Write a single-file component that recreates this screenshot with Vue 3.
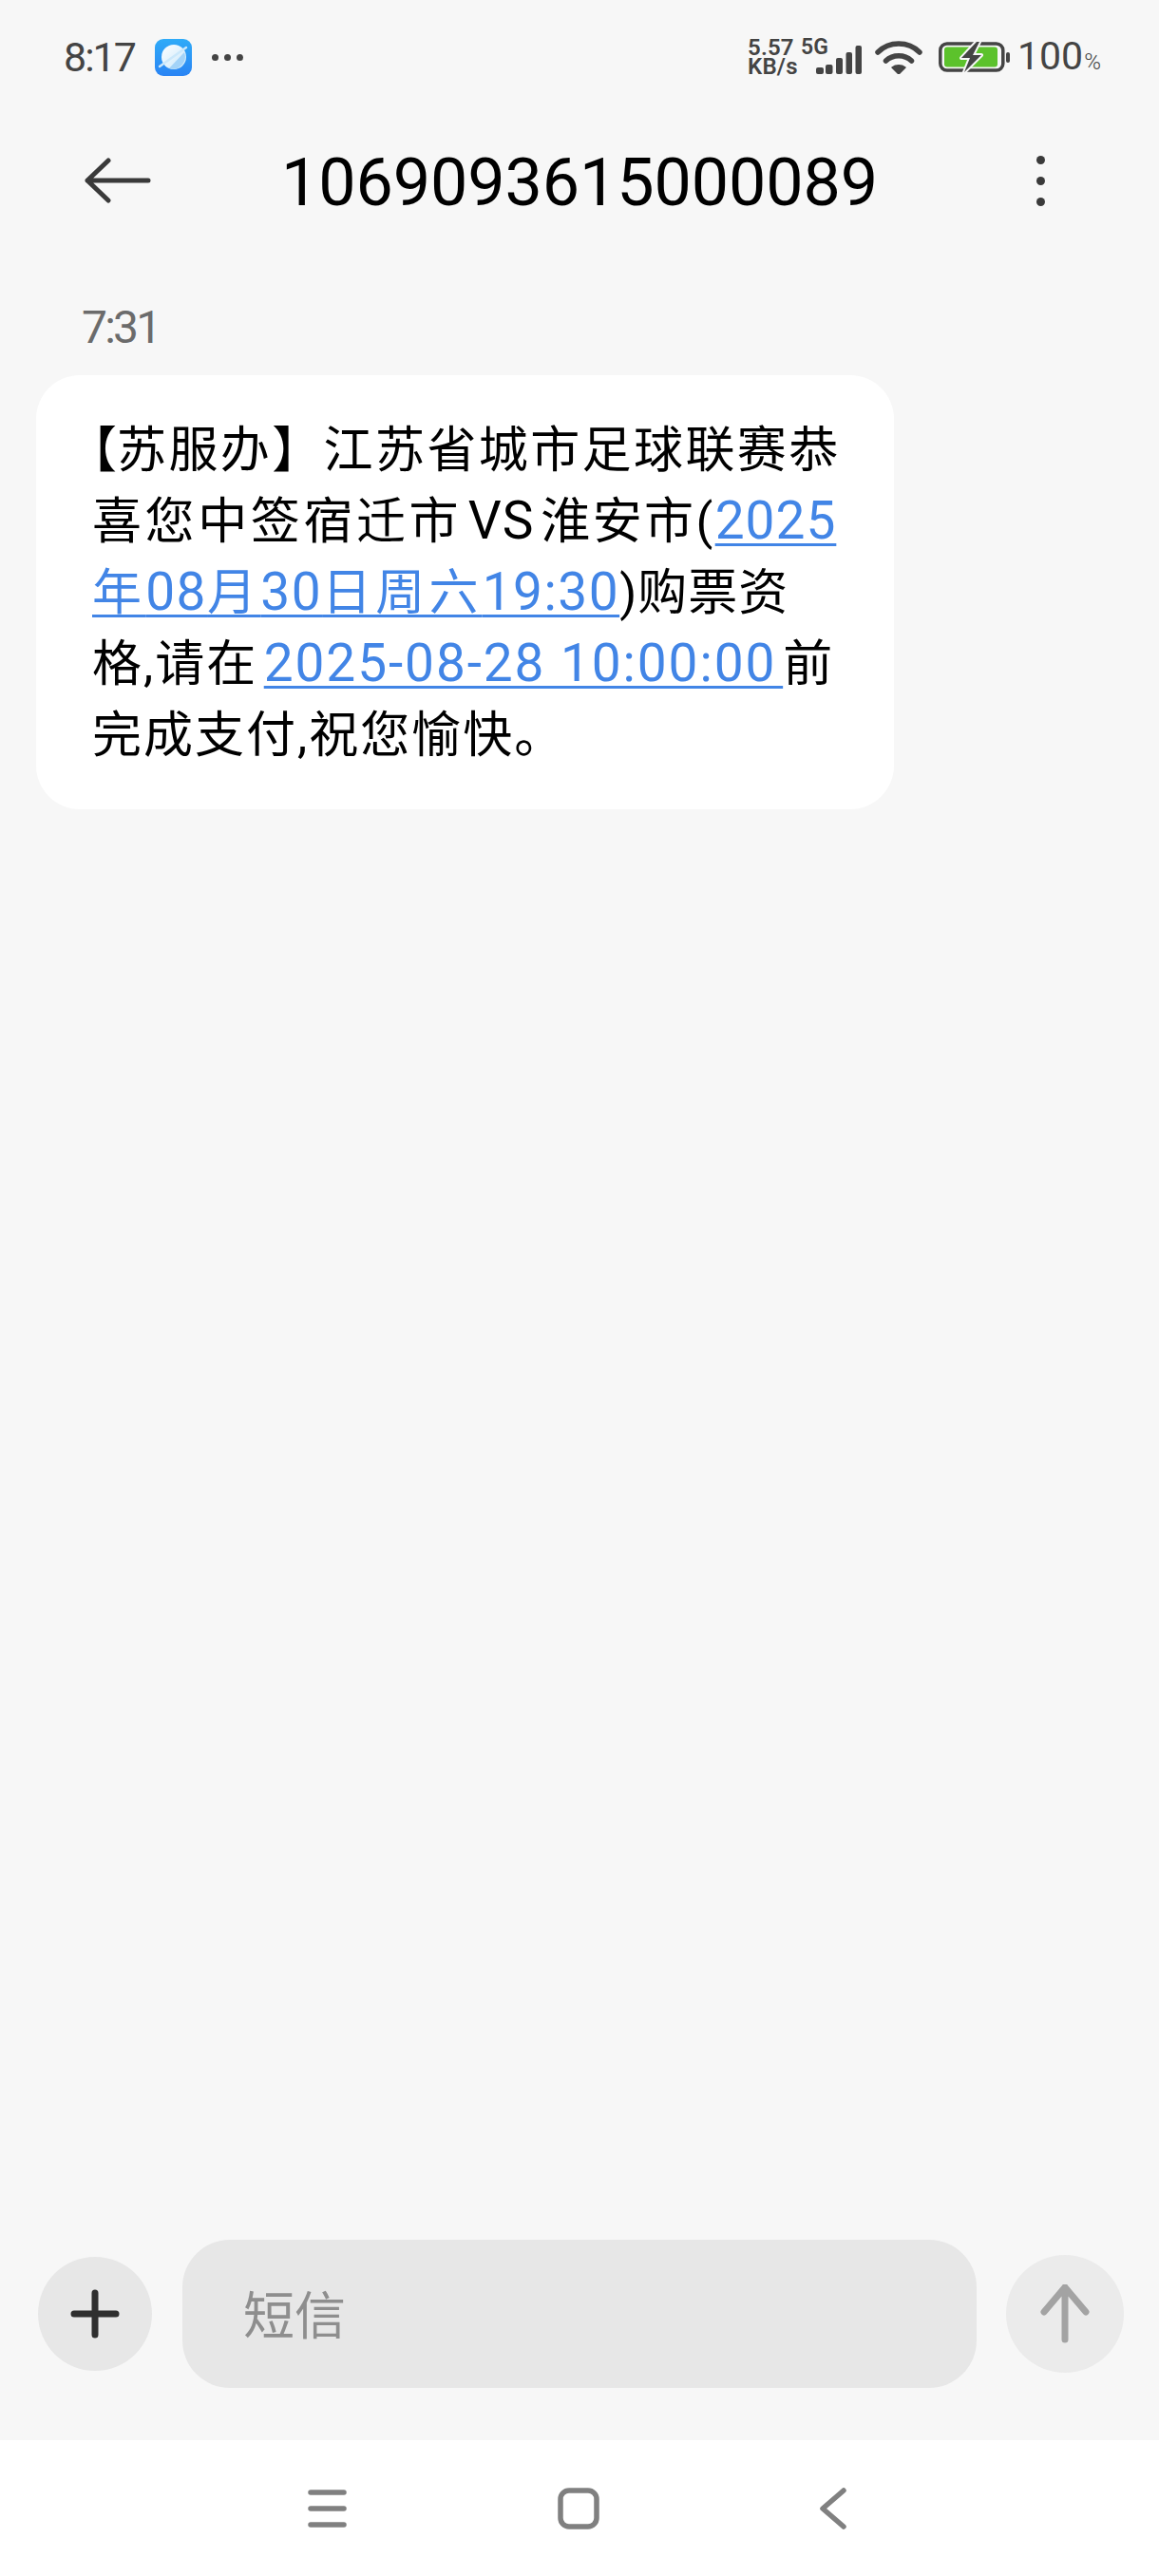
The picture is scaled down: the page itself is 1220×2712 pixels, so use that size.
<script setup>
const bars = [
  { x: 0, y: 23, w: 8, h: 7 },
  { x: 10, y: 20, w: 7.5, h: 10 },
  { x: 21, y: 13, w: 7, h: 17 },
  { x: 31.5, y: 7, w: 6.5, h: 23 },
  { x: 41.5, y: 0, w: 6.5, h: 30 }
]
</script>

<template>
  <div class="page">
    <div class="status">
      <span class="clock">8:17</span>
      <svg class="planet" width="39" height="39" viewBox="0 0 39 39">
        <defs>
          <linearGradient id="tile" x1="0" y1="0" x2="0" y2="1">
            <stop offset="0" stop-color="#2fabf8" />
            <stop offset="1" stop-color="#2a84f4" />
          </linearGradient>
          <linearGradient id="globe" x1="0" y1="0" x2="1" y2="1">
            <stop offset="0" stop-color="#ffffff" />
            <stop offset="1" stop-color="#c6e6fa" />
          </linearGradient>
        </defs>
        <rect width="39" height="39" rx="9" fill="url(#tile)" />
        <circle cx="20" cy="19" r="13" fill="url(#globe)" />
        <path d="M31 14 A13 13 0 0 1 15 31 Z" fill="#a3d3f8" />
        <path d="M5 29 L33 9" stroke="#cbe8fb" stroke-width="2.4" stroke-linecap="round" />
      </svg>
      <span class="more-dots"><i></i><i></i><i></i></span>
      <div class="status-right">
        <div class="speed"><span>5.57</span><span>KB/s</span></div>
        <div class="signal">
          <span class="net">5G</span>
          <svg class="bars" width="48" height="30" viewBox="0 0 48 30">
            <rect v-for="(b, i) in bars" :key="i" :x="b.x" :y="b.y" :width="b.w" :height="b.h" rx="2" fill="#444" />
          </svg>
        </div>
        <svg class="wifi" width="50" height="36" viewBox="0 0 50 36">
          <path d="M3 13 C15 1 35 1 47 13" fill="none" stroke="#444" stroke-width="5.5" stroke-linecap="round" />
          <path d="M11.500 22 C19 15 31 15 38.500 22" fill="none" stroke="#444" stroke-width="5.500" stroke-linecap="round" />
          <path d="M18 29 C22 26 28 26 32 29 L25 36 Z" fill="#444" stroke="#444" stroke-width="1.500" stroke-linejoin="round" />
        </svg>
        <svg class="battery" width="76" height="34" viewBox="0 0 76 34">
          <rect x="1.800" y="3" width="66" height="28" rx="7" fill="none" stroke="#444" stroke-width="3.500" />
          <rect x="6" y="6.500" width="56" height="21" rx="3" fill="#5cc22c" />
          <rect x="71" y="12" width="4" height="11" rx="2" fill="#444" />
          <path d="M40 1 L24 18 L33 18 L27 33 L45 15 L36 15 L43 1 Z" fill="#444" stroke="#f7f7f7" stroke-width="4" stroke-linejoin="round" paint-order="stroke" />
        </svg>
        <span class="level">100<small>%</small></span>
      </div>
    </div>

    <header class="bar">
      <svg class="back" width="70" height="48" viewBox="0 0 70 48">
        <path d="M25 3 L3 24 L25 45 M3 24 H67" fill="none" stroke="#3a3a3a" stroke-width="5" stroke-linecap="round" stroke-linejoin="round" />
      </svg>
      <h1 class="title">1069093615000089</h1>
      <div class="menu"><i></i><i></i><i></i></div>
    </header>

    <div class="stamp">7:31</div>

    <div class="bubble">
      <span class="line l1"><span class="trim">【</span>苏服办】江苏省城市足球联赛恭</span>
      <span class="line l2">喜您中签宿迁市<span class="n">VS</span><span class="tail">淮安市(</span><a class="link"><span class="n">2025</span></a></span>
      <span class="line l3"><a class="link">年<span class="n">08</span>月<span class="n">30</span>日周六<span class="n">19:30</span></a>)购票资</span>
      <span class="line l4">格,请在<a class="link"><span class="n">2025-08-28 10:00:00</span></a>前</span>
      <span class="line l5">完成支付,祝您愉快。</span>
    </div>

    <div class="fill"></div>

    <div class="composer">
      <div class="round plus">
        <svg width="52" height="52" viewBox="0 0 52 52">
          <path d="M26 4 V48 M4 26 H48" stroke="#2f2f2f" stroke-width="7" stroke-linecap="round" />
        </svg>
      </div>
      <div class="field">短信</div>
      <div class="round send">
        <svg width="52" height="62" viewBox="0 0 52 62">
          <path d="M26 3 V58 M4 29 L26 3 L48 29" fill="none" stroke="#a3a3a3" stroke-width="7" stroke-linecap="round" stroke-linejoin="round" />
        </svg>
      </div>
    </div>

    <nav class="nav">
      <svg width="41" height="44" viewBox="0 0 41 44">
        <path d="M3 5 H38 M3 22 H38 M3 39 H38" stroke="#808080" stroke-width="5.500" stroke-linecap="round" />
      </svg>
      <svg class="home" width="44" height="44" viewBox="0 0 44 44">
        <rect x="3" y="3" width="38" height="38" rx="9" fill="none" stroke="#808080" stroke-width="5.500" />
      </svg>
      <svg class="return" width="28" height="44" viewBox="0 0 28 44">
        <path d="M25 3 L3 22 L25 41" fill="none" stroke="#808080" stroke-width="5.500" stroke-linecap="round" stroke-linejoin="round" />
      </svg>
    </nav>
  </div>
</template>

<style scoped>
.page {
  width: 1220px;
  height: 2712px;
  background: #f7f7f7;
  display: flex;
  flex-direction: column;
  overflow: hidden;
  font-family: Roboto, "Noto Sans CJK SC", sans-serif;
  color: #000;
}
.status {
  height: 120px;
  display: flex;
  align-items: center;
  padding: 0 59px 0 67px;
  color: #444;
}
.clock {
  font-size: 43px;
  letter-spacing: -2px;
  width: 96px;
}
.planet { flex: none; }
.more-dots {
  display: flex;
  gap: 6px;
  margin-left: 21px;
}
.more-dots i {
  width: 7px;
  height: 7px;
  border-radius: 50%;
  background: #444;
}
.status-right {
  margin-left: auto;
  display: flex;
  align-items: center;
}
.speed {
  display: flex;
  flex-direction: column;
  width: 52px;
  font-size: 24px;
  font-weight: 600;
  line-height: 20px;
  letter-spacing: 0.2px;
}
.signal {
  position: relative;
  width: 64px;
  height: 36px;
  margin-left: 4px;
}
.net {
  position: absolute;
  left: 0;
  top: -2px;
  font-size: 23px;
  font-weight: 600;
  line-height: 20px;
}
.bars {
  position: absolute;
  right: 0;
  bottom: 0;
}
.wifi { margin-left: 14px; }
.battery { margin-left: 17px; }
.level {
  margin: 4px 0 0 7px;
  font-size: 41px;
  line-height: 46px;
  width: 90px;
  white-space: nowrap;
}
.level small {
  font-size: 24px;
  font-weight: 300;
  margin-left: 1px;
}
.bar {
  height: 140px;
  display: grid;
  grid-template-columns: 1fr auto 1fr;
  align-items: center;
  padding: 0 89px;
}
.title {
  margin: 4px 0 0;
  font-size: 70px;
  font-weight: 400;
  line-height: 84px;
  letter-spacing: -0.1px;
}
.menu {
  justify-self: end;
  margin-right: 31px;
  display: flex;
  flex-direction: column;
  gap: 13px;
}
.menu i {
  width: 9px;
  height: 9px;
  border-radius: 50%;
  background: #3a3a3a;
}
.stamp {
  margin: 60px 0 25px 86px;
  font-size: 48px;
  line-height: 50px;
  color: #6b6b6b;
  letter-spacing: -2.8px;
}
.bubble {
  width: 903px;
  box-sizing: border-box;
  margin-left: 38px;
  padding: 42px 0 40px 59px;
  background: #fff;
  border-radius: 46px;
  font-size: 52px;
  line-height: 75px;
  letter-spacing: 2.4px;
  text-autospace: normal;
}
.line {
  display: block;
  white-space: nowrap;
}
.trim {
  font-feature-settings: "halt";
  letter-spacing: 0;
}
.l2 { letter-spacing: 3.6px; }
.l2 .tail { letter-spacing: 2.4px; }
.l3 {
  letter-spacing: 1px;
  text-autospace: no-autospace;
}
.l3 .link { letter-spacing: 4.2px; }
.n {
  font-size: 55px;
  line-height: 1;
  letter-spacing: 1px;
}
.l3 .n { letter-spacing: 1.5px; }
.l4 { letter-spacing: 2px; }
.l4 .n { letter-spacing: 1.9px; }
.l5 { letter-spacing: 2px; }
.link {
  color: #4285e6;
  text-decoration: underline;
  text-decoration-thickness: 3px;
  text-underline-offset: 5px;
}
.fill { flex: 1; }
.composer {
  display: flex;
  align-items: center;
  padding: 0 37px 55px 40px;
}
.round {
  flex: none;
  border-radius: 50%;
  display: flex;
  align-items: center;
  justify-content: center;
}
.plus {
  width: 120px;
  height: 120px;
  background: #e7e7e7;
}
.send {
  width: 124px;
  height: 124px;
  margin-left: 31px;
  background: #ebebeb;
}
.field {
  flex: 1;
  box-sizing: border-box;
  height: 156px;
  margin-left: 32px;
  padding: 0 0 3px 64px;
  display: flex;
  align-items: center;
  background: #e7e7e7;
  border-radius: 50px;
  font-size: 54px;
  color: #8e8e8e;
}
.nav {
  height: 143px;
  box-sizing: border-box;
  padding: 50px 0 0 324px;
  background: #fff;
  display: flex;
  align-items: flex-start;
}
.home { margin-left: 222px; }
.return { margin-left: 232px; }
</style>
